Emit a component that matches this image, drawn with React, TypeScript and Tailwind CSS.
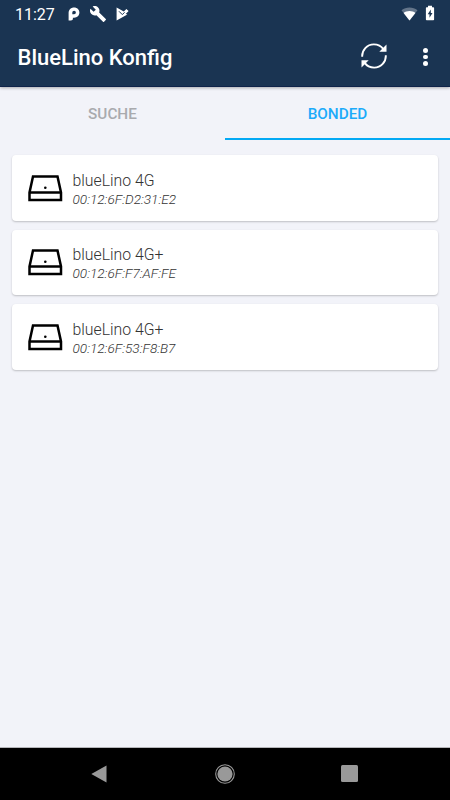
import { useState } from 'react';

const tabs = ['SUCHE', 'BONDED'];

const devices = [
  { name: 'blueLino 4G', address: '00:12:6F:D2:31:E2' },
  { name: 'blueLino 4G+', address: '00:12:6F:F7:AF:FE' },
  { name: 'blueLino 4G+', address: '00:12:6F:53:F8:B7' },
];

function StatusBar() {
  return (
    <div className="h-7 flex items-center justify-between pl-[15px] pr-[15px] text-white">
      <div className="flex items-center">
        <span className="w-[53px] text-[16px] leading-7 pt-px font-normal">11:27</span>
        <svg className="w-3 h-[14px] -mt-px" viewBox="0 0 12 14">
          <path
            fillRule="evenodd"
            fill="currentColor"
            d="M.6 13.400V5.800C.6 2.500 3 .4 6.100.4s5.300 2.200 5.300 5.200-2.200 5.200-5.300 5.200H4.900v.9c0 1.100-.8 1.700-1.900 1.700zM4.300 7.300h1.800a1.800 1.800 0 1 0-1.800-1.800z"
          />
        </svg>
        <svg className="ml-[10px] w-4 h-4 -mt-px" viewBox="1 1 22 22">
          <path
            fill="currentColor"
            d="M22.700 19l-9.100-9.100c.9-2.300.4-5-1.500-6.900-2-2-5-2.400-7.400-1.300L9 6 6 9 1.600 4.700C.4 7.100.9 10.100 2.900 12.100c1.900 1.900 4.600 2.400 6.900 1.500l9.100 9.100c.4.4 1 .4 1.400 0l2.300-2.300c.5-.4.5-1.100.1-1.400z"
          />
        </svg>
        <svg className="ml-[10px] w-[13px] h-[14px] -mt-px" viewBox="0 0 13 14">
          <path fill="currentColor" d="M.6.4 7.800 4.400 10.400 1.900 12.600 4.100 9.700 6.900 11.400 7.600.6 13.500z" />
          <path fill="none" stroke="#1a3452" strokeWidth="1" d="M3 4.300l3.300 3.300L8.600 5.300" />
        </svg>
      </div>
      <div className="flex items-center">
        <svg className="w-[17px] h-[14px] -mt-px" viewBox="0 0 17 14">
          <path fill="#64758a" d="M8.500 13.500.5 3.300C2.800 1.500 5.500.6 8.500.6s5.700.9 8 2.700z" />
          <path fill="currentColor" d="M8.500 13.500 2.600 6C4.200 4.800 6.300 4.100 8.500 4.100s4.300.7 5.900 1.900z" />
        </svg>
        <svg className="ml-[7px] w-[10px] h-4 -mt-[2px]" viewBox="0 0 10 16">
          <path
            fill="currentColor"
            d="M3 .8h4v1.500h1.300c.5 0 .8.3.8.8v11.300c0 .5-.3.800-.8.800H1.700c-.5 0-.8-.3-.8-.8V3.100c0-.5.3-.8.8-.8H3z"
          />
          <path fill="#1a3452" d="M5.800 4.600 2.700 9.300h1.800v3.500l3-4.900H5.800z" />
        </svg>
      </div>
    </div>
  );
}

function RefreshIcon() {
  return (
    <svg className="w-[26px] h-[26px]" viewBox="0 0 26 26">
      <g fill="none" stroke="white" strokeWidth="1.900">
        <path d="M1.200 13.800C.8 7 6 1.400 12.800 1.400c4 0 7.500 1.800 9.700 5" />
        <path d="M24.800 12.200c.4 6.800-4.800 12.400-11.600 12.400-4 0-7.500-1.800-9.700-5" />
      </g>
      <path fill="white" d="M25.500 1.600v7.200h-7.200z" />
      <path fill="white" d="M.5 24.400v-7.200h7.200z" />
    </svg>
  );
}

function DeviceIcon() {
  return (
    <svg className="w-[35px] h-[27px] mt-px shrink-0" viewBox="0 0 35 27">
      <g fill="none" stroke="black" strokeWidth="2.500">
        <path d="M1.500 17.500 5 1.500h24.500l3.500 16v7.500H1.500z" />
        <path d="M1.500 17.500H33" />
      </g>
      <circle cx="17.300" cy="12.700" r="1.300" />
    </svg>
  );
}

export default function App() {
  const [activeTab, setActiveTab] = useState('BONDED');

  return (
    <div className="w-[450px] h-[800px] flex flex-col overflow-hidden bg-[#f2f3f9] font-[Roboto,sans-serif]">
      <header className="relative h-[87px] shrink-0 bg-[#1a3452] border-b border-[#0f2349] shadow-[0_1px_3px_rgba(0,0,0,0.3)]">
        <StatusBar />
        <div className="h-14 flex items-center pl-[17.500px] pr-[22px] text-white">
          <h1 className="flex-1 text-[22px] leading-7 font-medium pt-[4px]">BlueLino Konfig</h1>
          <button className="mr-[36px]" aria-label="Refresh">
            <RefreshIcon />
          </button>
          <button className="flex flex-col gap-[2px] pt-[2px]" aria-label="Menu">
            <span className="size-[4.600px] rounded-full bg-white" />
            <span className="size-[4.600px] rounded-full bg-white" />
            <span className="size-[4.600px] rounded-full bg-white" />
          </button>
        </div>
      </header>

      <nav className="h-[53px] shrink-0 grid grid-cols-2">
        {tabs.map((tab) => (
          <button
            key={tab}
            onClick={() => setActiveTab(tab)}
            className={`text-[15.300px] font-medium border-b-2 pt-[3px] ${
              activeTab === tab ? 'text-[#1dabfa] border-[#03a9f4]' : 'text-[#a9aaae] border-transparent'
            }`}
          >
            {tab}
          </button>
        ))}
      </nav>

      <main className="flex-1 flex flex-col gap-[9px] px-3 pt-[15px]">
        {devices.map((device) => (
          <div
            key={device.address}
            className="h-[65.500px] shrink-0 flex items-center pl-4 bg-white rounded-[4px] shadow-[0_1px_2px_rgba(0,0,0,0.22)]"
          >
            <DeviceIcon />
            <div className="ml-[9.500px] pt-[4px]">
              <div className="text-[15.800px] leading-[19px] font-light text-[#333]">{device.name}</div>
              <div className="text-[13.600px] leading-[19px] font-light italic text-[#333]">{device.address}</div>
            </div>
          </div>
        ))}
      </main>

      <footer className="h-[53px] shrink-0 border-t border-[#b5b5b9] bg-black grid grid-cols-[1fr_52px_1fr] items-center">
        <svg className="w-4 h-[18px] ml-[91px]" viewBox="0 0 16 18">
          <path fill="#999" d="M15.500.5v17L.3 9z" />
        </svg>
        <svg className="w-5 h-5 mx-auto -mt-px" viewBox="0 0 20 20">
          <circle cx="10" cy="10" r="9.300" fill="none" stroke="#999" strokeWidth="1.100" />
          <circle cx="10" cy="10" r="7.600" fill="#999" />
        </svg>
        <div className="size-[17px] ml-[90px] -mt-px rounded-[1.500px] bg-[#999]" />
      </footer>
    </div>
  );
}
